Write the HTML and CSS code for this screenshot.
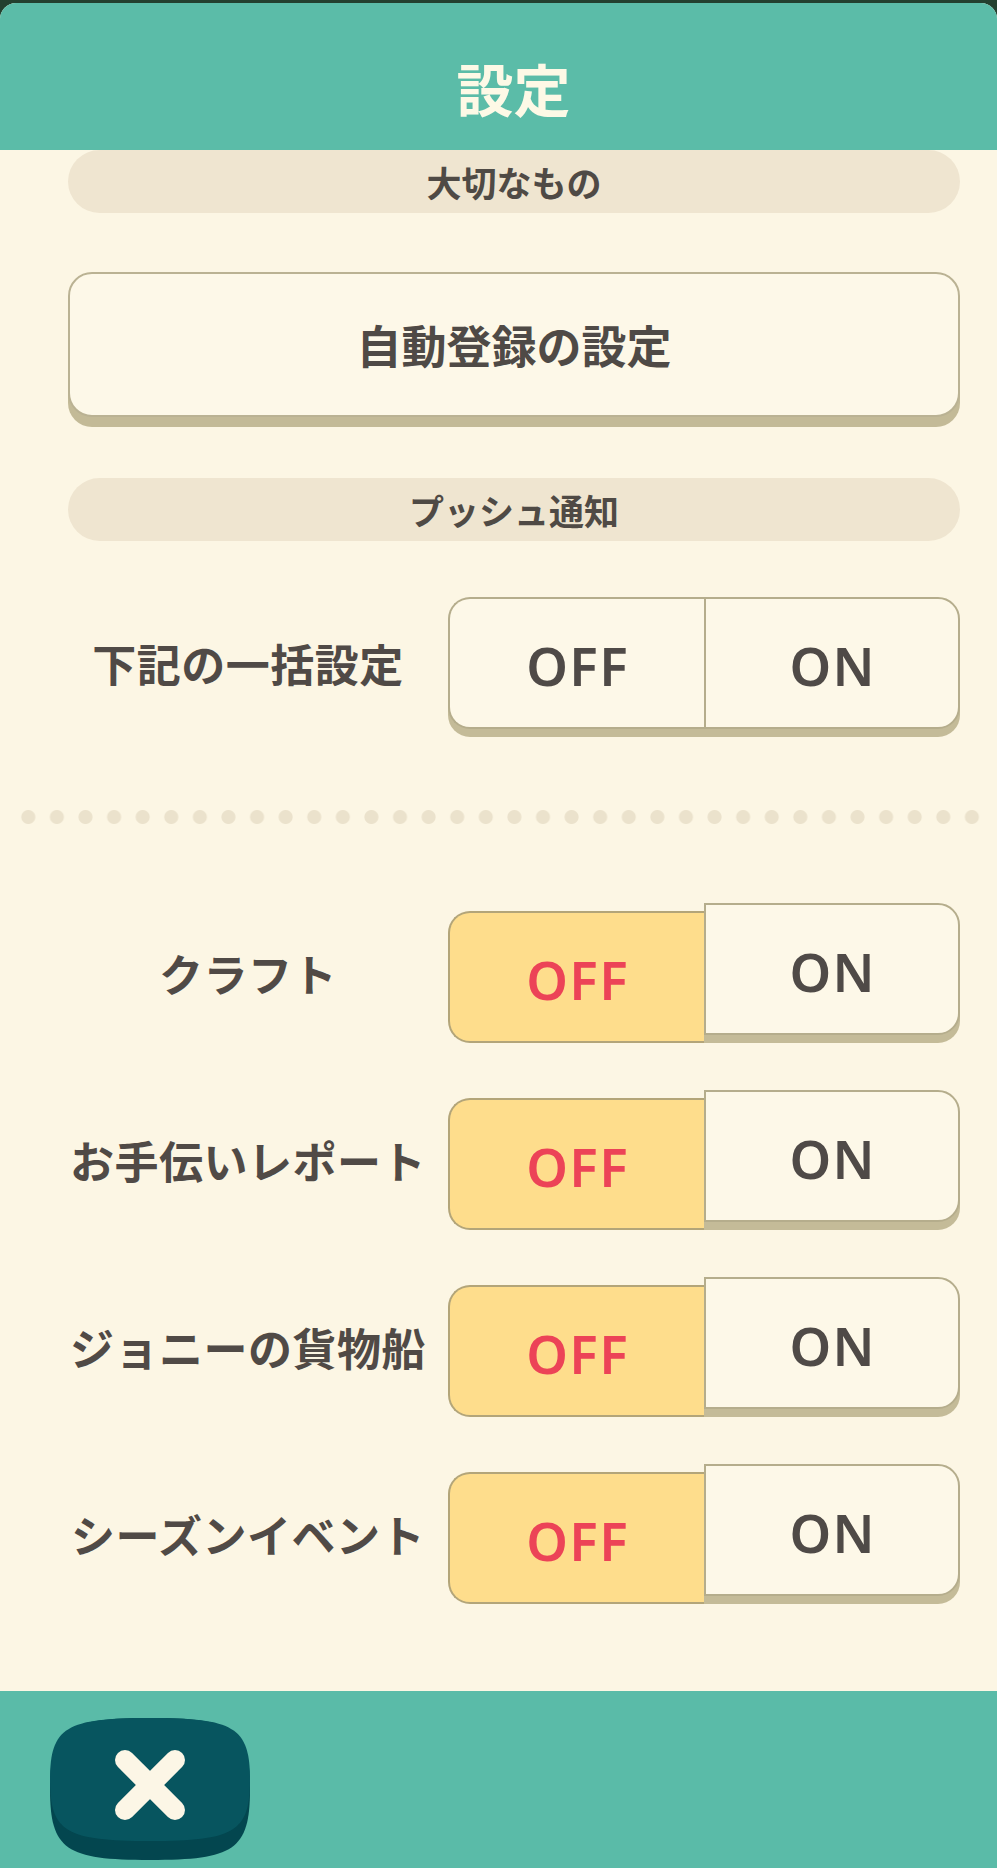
FILE: index.html
```html
<!DOCTYPE html>
<html lang="ja">
<head>
<meta charset="utf-8">
<title>設定</title>
<link rel="stylesheet" href="styles.css">
</head>
<body>
<div class="panel">
  <header class="header"><h1 class="title">設定</h1></header>
  <main class="main">
    <div class="pill pill-first">大切なもの</div>
    <div class="big-button">自動登録の設定</div>
    <div class="pill pill-push">プッシュ通知</div>

    <div class="row row-all">
      <div class="label">下記の一括設定</div>
      <div class="toggle">
        <div class="half half-off">OFF</div>
        <div class="half half-on">ON</div>
      </div>
    </div>

    <div class="dots"></div>

    <div class="row row-first">
      <div class="label">クラフト</div>
      <div class="toggle">
        <div class="half half-off pressed">OFF</div>
        <div class="half half-on">ON</div>
      </div>
    </div>
    <div class="row">
      <div class="label">お手伝いレポート</div>
      <div class="toggle">
        <div class="half half-off pressed">OFF</div>
        <div class="half half-on">ON</div>
      </div>
    </div>
    <div class="row">
      <div class="label">ジョニーの貨物船</div>
      <div class="toggle">
        <div class="half half-off pressed">OFF</div>
        <div class="half half-on">ON</div>
      </div>
    </div>
    <div class="row">
      <div class="label">シーズンイベント</div>
      <div class="toggle">
        <div class="half half-off pressed">OFF</div>
        <div class="half half-on">ON</div>
      </div>
    </div>
  </main>
  <footer class="footer">
    <div class="close-btn">
      <svg width="200" height="142" viewBox="0 0 200 142" aria-label="閉じる">
        <path d="M100,0 C184,0 200,10 200,71 C200,132 184,142 100,142 C16,142 0,132 0,71 C0,10 16,0 100,0 Z" fill="#03464f"/>
        <path d="M100,0 C184,0 200,9 200,62 C200,114 184,123 100,123 C16,123 0,114 0,62 C0,9 16,0 100,0 Z" fill="#07555f"/>
        <line x1="75" y1="42" x2="125" y2="92" stroke="#fcf6e6" stroke-width="20" stroke-linecap="round"/>
        <line x1="125" y1="42" x2="75" y2="92" stroke="#fcf6e6" stroke-width="20" stroke-linecap="round"/>
      </svg>
    </div>
  </footer>
</div>
</body>
</html>
```

FILE: styles.css
```css
html, body {
  margin: 0;
  padding: 0;
}
body {
  width: 997px;
  height: 1868px;
  background: #23402f;
  padding-top: 3px;
  box-sizing: border-box;
  overflow: hidden;
  font-family: "Noto Sans CJK JP", "Noto Sans", sans-serif;
  color: #4f4a46;
}
.panel {
  height: 1865px;
  display: flex;
  flex-direction: column;
  background: #fcf6e4;
  border-radius: 16px 16px 0 0;
  overflow: hidden;
}
.header {
  height: 147px;
  box-sizing: border-box;
  padding: 22px 0 0 30px;
  background: #5bbca8;
  display: flex;
  align-items: center;
  justify-content: center;
  flex-shrink: 0;
}
.title {
  margin: 0;
  font-size: 57px;
  font-weight: 700;
  line-height: 1;
  color: #fdf9e6;
  letter-spacing: 0;
}
.main {
  flex: 1;
  padding: 0 37px 0 68px;
  display: flex;
  flex-direction: column;
}
.pill {
  height: 63px;
  border-radius: 32px;
  background: #efe5d0;
  display: flex;
  align-items: center;
  justify-content: center;
  font-size: 35px;
  font-weight: 700;
  color: #4f4a45;
  line-height: 1;
}
.pill-push {
  margin-top: 61px;
}
.big-button {
  margin-top: 59px;
  height: 145px;
  box-sizing: border-box;
  border: 2px solid #bab293;
  border-radius: 24px;
  background: #fdf8e8;
  box-shadow: 0 10px 0 #c3ba97;
  display: flex;
  align-items: center;
  justify-content: center;
  font-size: 45px;
  font-weight: 700;
  line-height: 1;
  color: #4f4a46;
}
.row {
  display: flex;
  align-items: center;
  gap: 20px;
  margin-top: 47px;
}
.row-all {
  margin-top: 56px;
}
.row-first {
  margin-top: 79px;
}
.label {
  width: 360px;
  flex-shrink: 0;
  text-align: center;
  white-space: nowrap;
  font-size: 44px;
  font-weight: 700;
  line-height: 1;
  letter-spacing: 0.5px;
  color: #504a46;
}
.toggle {
  display: flex;
  align-items: flex-start;
  width: 512px;
}
.half {
  width: 256px;
  height: 132px;
  box-sizing: border-box;
  border: 2px solid #b5ad8c;
  background: #fdf8e8;
  box-shadow: 0 8px 0 #c4bb98;
  display: flex;
  align-items: center;
  justify-content: center;
  font-family: "Noto Sans", "Open Sans", sans-serif;
  font-size: 53px;
  font-weight: 600;
  line-height: 1;
  letter-spacing: 1.5px;
  text-indent: 1.5px;
  color: #4f4a47;
  padding-top: 4px;
}
.half-off {
  border-right: none;
  border-radius: 22px 0 0 22px;
}
.half-on {
  border-radius: 0 22px 22px 0;
}
.half.pressed {
  margin-top: 8px;
  background: #fedd8c;
  border-color: #b3a579;
  box-shadow: none;
  color: #ec4357;
}
.dots {
  margin-top: 81px;
  margin-left: -54px;
  width: 972px;
  height: 14px;
  background-image: radial-gradient(circle at center, #ebe2cc 0, #ebe2cc 6.5px, rgba(235, 226, 204, 0) 7.5px);
  background-size: 28.6px 14px;
  background-repeat: repeat-x;
}
.footer {
  height: 177px;
  flex-shrink: 0;
  background: #5abba8;
  padding: 27px 0 0 50px;
  box-sizing: border-box;
}
.close-btn {
  width: 200px;
  height: 142px;
}
.close-btn svg {
  display: block;
}
```
